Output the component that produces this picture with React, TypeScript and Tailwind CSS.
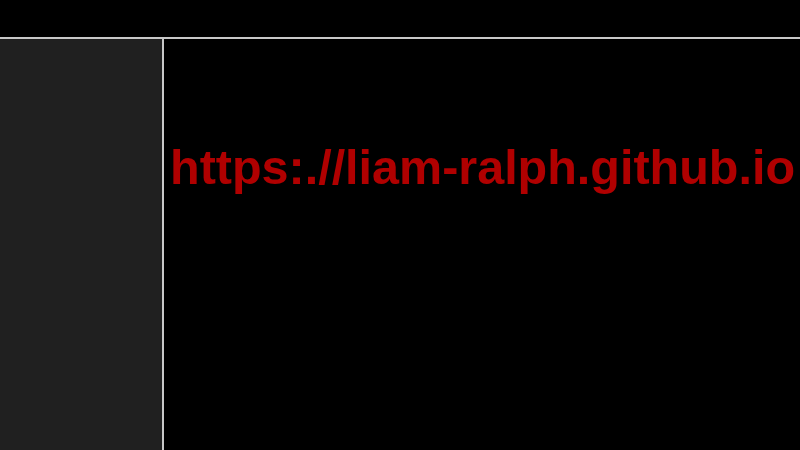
export default function App() {
  return (
    <div className="w-[800px] h-[450px] bg-black flex flex-col overflow-hidden" style={{ fontFamily: '"Liberation Sans", Arial, sans-serif' }}>
      <header className="h-[39px] shrink-0 bg-black border-b-2 border-[#c8c8c8]"></header>
      <div className="flex flex-1 min-h-0">
        <aside className="w-[164px] shrink-0 bg-[#202020] border-r-2 border-[#c8c8c8]"></aside>
        <main className="flex-1 bg-black pl-[6px] pt-[104px]">
          <h1 className="text-[48.5px] leading-none font-bold text-[#b00000] whitespace-nowrap">
            https:.//liam-ralph.github.io
          </h1>
        </main>
      </div>
    </div>
  )
}
